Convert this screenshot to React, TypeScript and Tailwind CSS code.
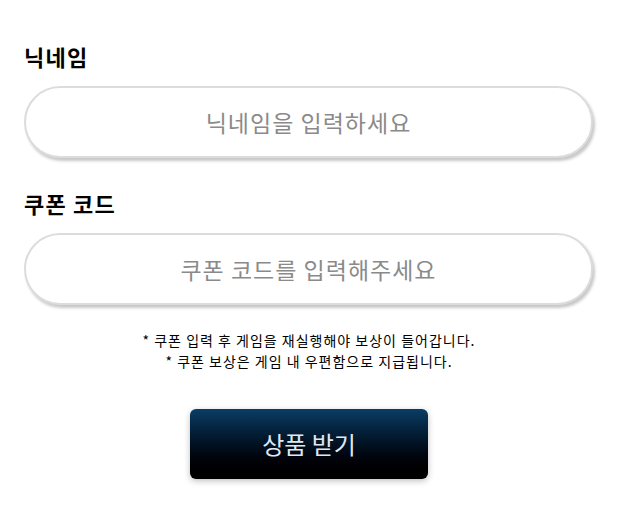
const font = "font-['Noto_Sans_CJK_KR','Noto_Sans',sans-serif]";

function Field({ label, placeholder }: { label: string; placeholder: string }) {
  return (
    <div className="flex flex-col">
      <label className="text-[22px] font-bold leading-[28px] tracking-[1.2px] text-black">{label}</label>
      <input
        placeholder={placeholder}
        className="mt-[16px] h-[72px] w-full rounded-full border-2 border-[#dcdcdc] bg-white text-center text-[23px] tracking-[1px] text-[#444] shadow-[2px_3px_3px_rgba(0,0,0,0.22)] outline-none placeholder:text-[#8a8a8a]"
      />
    </div>
  );
}

export default function App() {
  return (
    <div className={`${font} min-h-[505px] w-[618px] bg-white px-[24px] pt-[42px]`}>
      <div className="flex w-[569px] flex-col gap-[31px]">
        <Field label="닉네임" placeholder="닉네임을 입력하세요" />
        <Field label="쿠폰 코드" placeholder="쿠폰 코드를 입력해주세요" />
      </div>

      <div className="mt-[25px] flex flex-col items-center text-[14px] leading-[21px] tracking-[1px] text-black">
        <p>* 쿠폰 입력 후 게임을 재실행해야 보상이 들어갑니다.</p>
        <p>* 쿠폰 보상은 게임 내 우편함으로 지급됩니다.</p>
      </div>

      <div className="mt-[37px] flex justify-center">
        <button
          type="button"
          className="h-[70px] w-[238px] rounded-[6px] bg-gradient-to-b from-[#0b3d66] to-[#000000] text-[24px] text-[#e2e8f0] shadow-[0_2px_6px_rgba(0,0,0,0.25)]"
        >
          상품 받기
        </button>
      </div>
    </div>
  );
}
